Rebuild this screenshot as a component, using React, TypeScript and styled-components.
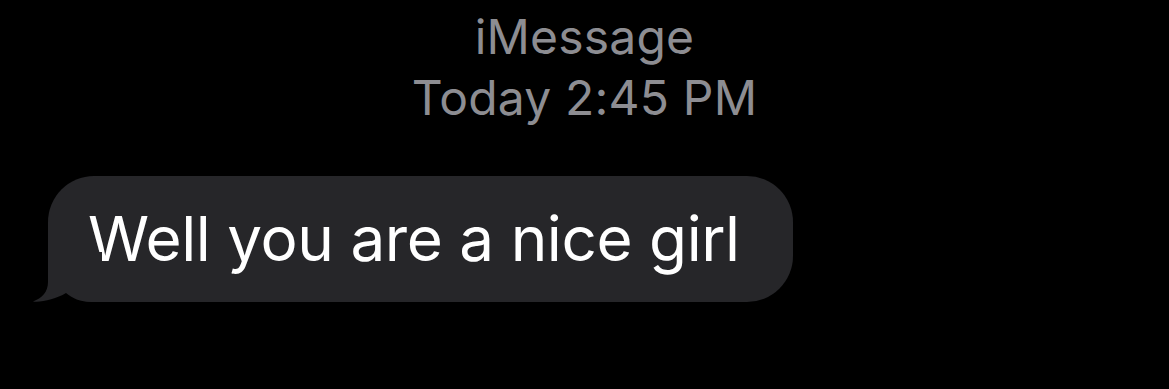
import React from "react";
import styled, { createGlobalStyle } from "styled-components";

const Global = createGlobalStyle`
  html, body { margin: 0; padding: 0; background: #000; }
  body { font-family: Inter, "Liberation Sans", sans-serif; -webkit-font-smoothing: antialiased; }
`;

const Screen = styled.div`
  width: 1169px;
  height: 389px;
  background: #000;
  display: flex;
  flex-direction: column;
  overflow: hidden;
`;

const Header = styled.div`
  display: flex;
  flex-direction: column;
  align-items: center;
  padding-top: 6px;
  color: #8d8d92;
  font-size: 48px;
  line-height: 61px;
  font-weight: 400;
`;

const HeaderLine = styled.div`
  letter-spacing: 0.2px;
`;

const Row = styled.div`
  display: flex;
  padding-left: 48px;
  margin-top: 48px;
`;

const Bubble = styled.div`
  position: relative;
  background: #262629;
  color: #fff;
  border-radius: 46px;
  padding: 25px 53px 25px 40px;
  font-size: 62px;
  line-height: 76px;
  letter-spacing: -0.45px;
`;

const Tail = styled.svg`
  position: absolute;
  left: -16px;
  bottom: 0;
  width: 70px;
  height: 50px;
  display: block;
`;

export default function App() {
  return (
    <>
      <Global />
      <Screen>
        <Header>
          <HeaderLine>iMessage</HeaderLine>
          <HeaderLine>Today 2:45 PM</HeaderLine>
        </Header>
        <Row>
          <Bubble>
            <Tail viewBox="0 0 70 50">
              <path
                d="M16 0 L16 30 C16 40 10 46 1 49.5 C10 50.5 24 47 34 41 C40 46 48 50 60 50 L70 50 L70 0 Z"
                fill="#262629"
              />
            </Tail>
            Well you are a nice girl
          </Bubble>
        </Row>
      </Screen>
    </>
  );
}
